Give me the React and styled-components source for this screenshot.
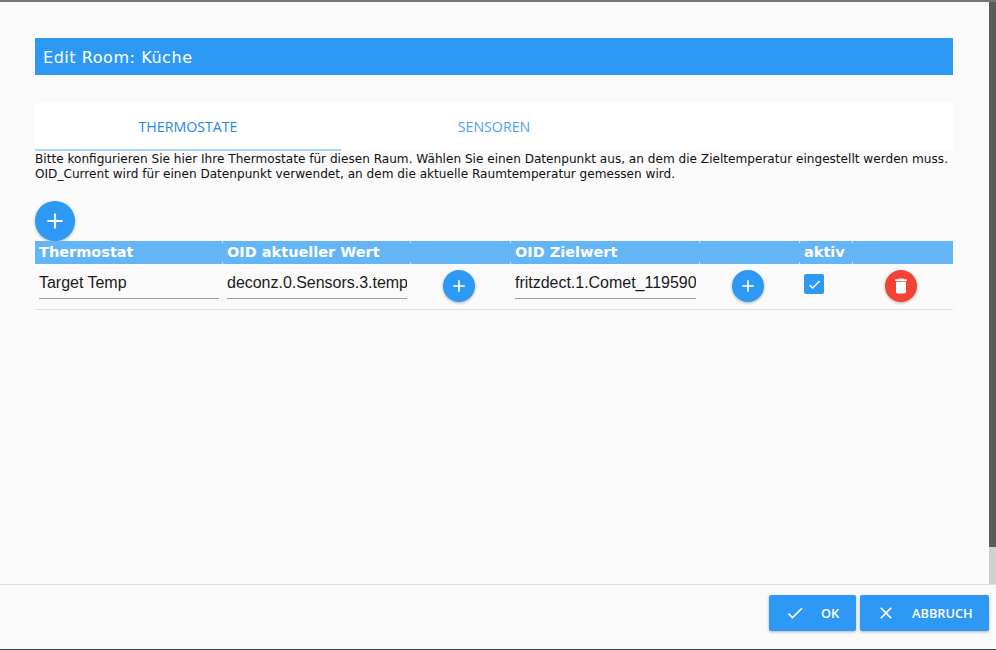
import React from "react"
import styled, { createGlobalStyle } from "styled-components"

const GlobalStyle = createGlobalStyle`
  html, body {
    margin: 0;
    padding: 0;
    background: #fafafa;
  }
  * {
    box-sizing: border-box;
  }
`

const Dialog = styled.div`
  width: 996px;
  height: 650px;
  display: flex;
  flex-direction: column;
  background: #fafafa;
  border-top: 2px solid #757575;
  border-bottom: 1px solid #37474f;
  overflow: hidden;
  position: relative;
`

const Content = styled.div`
  height: 582px;
  padding: 36px 43px 0 35px;
  font-family: "DejaVu Sans", sans-serif;
`

const TitleBar = styled.div`
  height: 37px;
  background: #2d99f5;
  color: #fff;
  font-size: 16px;
  letter-spacing: 0.55px;
  line-height: 39px;
  padding-left: 8px;
`

const Tabs = styled.div`
  margin-top: 28px;
  height: 48px;
  background: #fff;
  display: flex;
`

const Tab = styled.div`
  width: 306px;
  height: 48px;
  display: flex;
  align-items: center;
  justify-content: center;
  font-family: "Open Sans", sans-serif;
  font-size: 14.2px;
  font-weight: 500;
  color: ${p => (p.active ? "#2188ea" : "#4ba3f1")};
  border-bottom: 2px solid ${p => (p.active ? "#a8d5f8" : "transparent")};
`

const Help = styled.div`
  font-size: 12.1px;
  line-height: 15px;
  color: #111;
  padding-top: 1px;
  white-space: nowrap;
`

const AddRow = styled.div`
  margin-top: 19px;
  height: 40px;
`

const RoundButton = styled.div`
  width: ${p => p.size}px;
  height: ${p => p.size}px;
  border-radius: 50%;
  background: ${p => p.color || "#2d99f5"};
  display: flex;
  align-items: center;
  justify-content: center;
  box-shadow: 0 1px 3px rgba(0, 0, 0, 0.3);
`

const Row = styled.div`
  display: grid;
  grid-template-columns: 188px 188px 100px 189px 100px 53px 100px;
`

const HeadRow = styled(Row)`
  height: 23px;
  background: #64b5f6;
  color: #fff;
  font-weight: bold;
  font-size: 14.5px;
  line-height: 23px;
`

const HeadCell = styled.div`
  padding-left: 4px;
  background:
    linear-gradient(#c5e2fb, #c5e2fb) right top / 1px 2px no-repeat,
    linear-gradient(#c5e2fb, #c5e2fb) right bottom / 1px 2px no-repeat;
  &:last-child {
    background: none;
  }
`

const BodyRow = styled(Row)`
  height: 46px;
  border-bottom: 1px solid #e0e0e0;
`

const Cell = styled.div`
  padding: 6px ${p => (p.center ? "8px" : "4px")} 0 4px;
  display: flex;
  justify-content: ${p => (p.center ? "center" : "flex-start")};
`

const FieldInput = styled.div`
  width: 100%;
  height: 29px;
  border-bottom: 1px solid #9e9e9e;
  font-family: "Liberation Sans", sans-serif;
  font-size: 16px;
  line-height: 25px;
  letter-spacing: -0.02px;
  color: #1a1a1a;
  overflow: hidden;
  white-space: nowrap;
`

const Box = styled.div`
  width: 20px;
  height: 20px;
  margin-top: 4px;
  border-radius: 2px;
  background: #2d99f5;
  display: flex;
  align-items: center;
  justify-content: center;
`

const Footer = styled.div`
  flex: 1;
  border-top: 1px solid #e0e0e0;
  display: flex;
  justify-content: flex-end;
  gap: 4px;
  padding: 10px 7px 0 0;
`

const FootButton = styled.div`
  height: 36px;
  width: ${p => p.width}px;
  padding-left: 16px;
  background: #2d99f5;
  color: #fff;
  border-radius: 2px;
  box-shadow: 0 1px 3px rgba(0, 0, 0, 0.3);
  font-family: "Open Sans", sans-serif;
  font-size: 12.8px;
  font-weight: 600;
  display: flex;
  align-items: center;
  gap: 16px;
`

const Scrollbar = styled.div`
  position: absolute;
  right: 0;
  top: 0;
  width: 7px;
  height: 582px;
  background: #cfcfcf;
`

const ScrollThumb = styled.div`
  height: 545px;
  background: #5c5c5c;
`

const Plus = ({ size }) => (
  <svg width={size} height={size} viewBox="0 0 24 24" fill="#fff">
    <path d="M19 13h-6v6h-2v-6H5v-2h6V5h2v6h6v2z" />
  </svg>
)

const Trash = () => (
  <svg width="20" height="20" viewBox="0 0 24 24" fill="#fff">
    <path d="M6 19c0 1.1.9 2 2 2h8c1.1 0 2-.9 2-2V7H6v12zM19 4h-3.5l-1-1h-5l-1 1H5v2h14V4z" />
  </svg>
)

const Check = ({ size }) => (
  <svg width={size} height={size} viewBox="0 0 24 24" fill="#fff">
    <path d="M9 16.17 4.83 12l-1.42 1.41L9 19 21 7l-1.41-1.41z" />
  </svg>
)

const Close = ({ size }) => (
  <svg width={size} height={size} viewBox="0 0 24 24" fill="#fff">
    <path d="M19 6.41 17.59 5 12 10.59 6.41 5 5 6.41 10.59 12 5 17.59 6.41 19 12 13.41 17.59 19 19 17.59 13.41 12z" />
  </svg>
)

const App = () => (
  <>
    <GlobalStyle />
    <Dialog>
      <Content>
        <TitleBar>Edit Room: Küche</TitleBar>
        <Tabs>
          <Tab active>THERMOSTATE</Tab>
          <Tab>SENSOREN</Tab>
        </Tabs>
        <Help>
          Bitte konfigurieren Sie hier Ihre Thermostate für diesen Raum. Wählen Sie einen Datenpunkt aus, an dem die Zieltemperatur eingestellt werden muss.
          <br />
          OID_Current wird für einen Datenpunkt verwendet, an dem die aktuelle Raumtemperatur gemessen wird.
        </Help>
        <AddRow>
          <RoundButton size={40}>
            <Plus size={26} />
          </RoundButton>
        </AddRow>
        <HeadRow>
          <HeadCell>Thermostat</HeadCell>
          <HeadCell>OID aktueller Wert</HeadCell>
          <HeadCell />
          <HeadCell>OID Zielwert</HeadCell>
          <HeadCell />
          <HeadCell>aktiv</HeadCell>
          <HeadCell />
        </HeadRow>
        <BodyRow>
          <Cell>
            <FieldInput>Target Temp</FieldInput>
          </Cell>
          <Cell>
            <FieldInput>deconz.0.Sensors.3.temperature</FieldInput>
          </Cell>
          <Cell center>
            <RoundButton size={32}>
              <Plus size={20} />
            </RoundButton>
          </Cell>
          <Cell>
            <FieldInput>fritzdect.1.Comet_119590</FieldInput>
          </Cell>
          <Cell center>
            <RoundButton size={32}>
              <Plus size={20} />
            </RoundButton>
          </Cell>
          <Cell>
            <Box>
              <Check size={15} />
            </Box>
          </Cell>
          <Cell center>
            <RoundButton size={32} color="#f44336">
              <Trash />
            </RoundButton>
          </Cell>
        </BodyRow>
      </Content>
      <Footer>
        <FootButton width={87}>
          <Check size={20} />
          OK
        </FootButton>
        <FootButton width={129}>
          <Close size={20} />
          ABBRUCH
        </FootButton>
      </Footer>
      <Scrollbar>
        <ScrollThumb />
      </Scrollbar>
    </Dialog>
  </>
)

export default App
